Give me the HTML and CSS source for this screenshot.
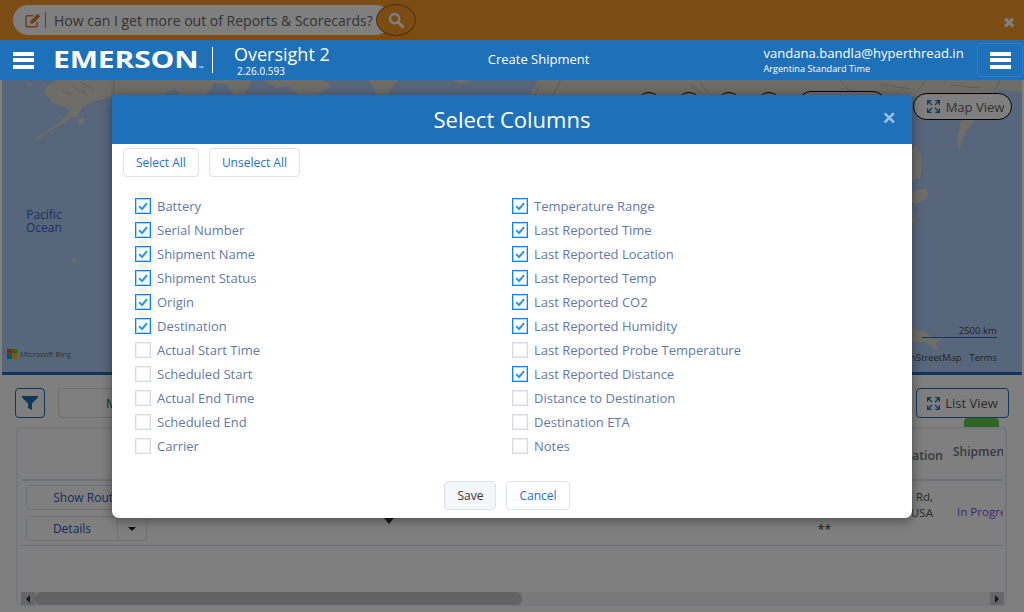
FILE: index.html
```html
<!DOCTYPE html>
<html lang="en">
<head>
<meta charset="utf-8">
<title>Select Columns</title>
<link rel="stylesheet" href="styles.css">
</head>
<body>
<svg class="defs" width="0" height="0" aria-hidden="true">
  <symbol id="tick" viewBox="0 0 16 16"><path d="M3.6 8.2 6.9 11.6 12.6 4.6" fill="none" stroke="currentColor" stroke-width="2.2"/></symbol>
  <symbol id="expand" viewBox="0 0 14 14"><path d="M.7 5V.7H5M.7.7 5.4 5.4M9 .7h4.3V5M13.3.7 8.6 5.4M.7 9v4.3H5M.7 13.3 5.4 8.6M9 13.3h4.3V9M13.3 13.3 8.6 8.6" fill="none" stroke="currentColor" stroke-width="1.4"/></symbol>
</svg>
<div class="promo">
  <div class="ask">
    <svg class="edit" viewBox="0 0 18 16"><path d="M13 9v4a1.6 1.6 0 0 1-1.6 1.6H2.6A1.6 1.6 0 0 1 1 13V4.6A1.6 1.6 0 0 1 2.6 3h6.2" fill="none" stroke="currentColor" stroke-width="1.6"/><path d="M6 8.2 13.4.8l2.8 2.8L8.8 11l-3.3.5z" fill="currentColor"/></svg>
    <span class="ask-sep"></span>
    <span class="ask-text">How can I get more out of Reports &amp; Scorecards?</span>
  </div>
  <div class="ask-go">
    <svg viewBox="0 0 16 16" width="16" height="16"><circle cx="6.6" cy="6.6" r="4.6" fill="none" stroke="currentColor" stroke-width="2.4"/><path d="M10 10l4.6 4.6" stroke="currentColor" stroke-width="3" stroke-linecap="round"/></svg>
  </div>
  <span class="promo-close">✖</span>
</div>
<header class="topbar">
  <div class="burger"><i></i><i></i><i></i></div>
  <div class="logo">EMERSON<small>™</small></div>
  <div class="brand">
    <div class="brand-name">Oversight 2</div>
    <div class="brand-ver">2.26.0.593</div>
  </div>
  <div class="nav-title">Create Shipment</div>
  <div class="user">
    <div class="user-mail">vandana.bandla@hyperthread.in</div>
    <div class="user-tz">Argentina Standard Time</div>
  </div>
  <div class="menu-btn"><div class="burger"><i></i><i></i><i></i></div></div>
</header>
<section class="map">
  <svg class="map-art" viewBox="0 0 1022 292" preserveAspectRatio="none">
    <g class="land">
      <path d="M55 0H110V17L93 21 80 28 76 36 70 38 58 45 45 53 34 61 36 57 48 49 60 40 68 31 62 27 50 22 42 12 45 6z"/>
      <path d="M76 40l5-3 2 4-5 4z"/>
      <path d="M24 1l7 5-5-1z"/>
      <path d="M110 0H250L243 15H232L225 4 213 3 204 15H180L172 8 162 15H110z"/>
      <path d="M262 0H322L330 6 316 15H298L286 6 274 8z"/>
      <path d="M368 0H396L386 15H376z"/>
      <path d="M452 0H468L460 4z"/>
      <path d="M528 15 538 0H1022V12L1000 10 980 16H528z"/>
      <path d="M977 28 974 42 965 52 959 70 957 62 960 44 966 32z"/>
      <path d="M916 64 922 80 920 98 912 100 912 70z"/>
      <path d="M912 112 926 108 928 118 916 124 912 122z"/>
      <path d="M912 128 915 140 912 146z"/>
      <path d="M912 248 925 252 932 258 945 256 936 263 938 272 925 262 912 262z"/>
      <path d="M71 178l3 2-1 3-3-2z"/>
    </g>
    <g class="coast">
      <path d="M112 0V15M70 6l14 8M80 3l12 6M60 10l8 4M540 4l-6 11M560 0l-8 15M690 5l10 8M700 2l6 10M840 0l10 12M880 4l30 5M950 5l30 3M925 0l-8 12M1000 0l-5 10"/>
    </g>
  </svg>
  <div class="map-tools">
    <i class="dot"></i><i class="dot"></i><i class="dot"></i><i class="dot"></i><i class="pill"></i>
  </div>
  <button class="map-view"><svg class="ico"><use href="#expand"/></svg>Map View</button>
  <div class="ocean"><div>Pacific</div><div>Ocean</div></div>
  <div class="bing">
    <svg viewBox="0 0 10 10" width="10" height="10"><path fill="#f25022" d="M0 0h4.8v4.8H0z"/><path fill="#7fba00" d="M5.2 0H10v4.8H5.2z"/><path fill="#00a4ef" d="M0 5.2h4.8V10H0z"/><path fill="#ffb900" d="M5.2 5.2H10V10H5.2z"/></svg>
    <span>Microsoft Bing</span>
  </div>
  <div class="scale">2500 km</div>
  <div class="attrib"><span>OpenStreetMap</span><span>Terms</span></div>
</section>
<section class="toolbar">
  <button class="btn-blue filter"><svg viewBox="0 0 16 16" width="16" height="16"><path d="M0 1h16v1.4L10 8.6V15L6 13V8.6L0 2.4z" fill="currentColor"/></svg></button>
  <button class="btn-map">Map</button>
  <button class="btn-blue list"><svg class="ico"><use href="#expand"/></svg>List View</button>
  <span class="green-tab"></span>
</section>
<section class="card">
  <div class="grid head">
    <div></div><div></div>
    <div class="h-loc">Last Reported Location</div>
    <div class="h-status">Shipment Status</div>
  </div>
  <div class="grid row">
    <div class="actions">
      <button class="act">Show Route</button>
      <div class="split"><button class="act">Details</button><span class="caret"><i></i></span></div>
    </div>
    <div class="marker-cell"><i class="marker"></i></div>
    <div class="loc"><div>n Rd,</div><div>USA</div><div class="stars">**</div></div>
    <div class="status">In Progress</div>
  </div>
  <div class="scroll">
    <span class="arrow"><i class="tri-l"></i></span>
    <span class="thumb"></span>
    <span class="arrow"><i class="tri-r"></i></span>
  </div>
</section>
<div class="overlay"></div>
<div class="modal">
  <div class="modal-head"><h2>Select Columns</h2><span class="modal-x">✕</span></div>
  <div class="bulk"><button class="ghost">Select All</button><button class="ghost">Unselect All</button></div>
  <div class="cols">
    <label class="opt"><span class="box on"><svg><use href="#tick"/></svg></span>Battery</label>
    <label class="opt"><span class="box on"><svg><use href="#tick"/></svg></span>Temperature Range</label>
    <label class="opt"><span class="box on"><svg><use href="#tick"/></svg></span>Serial Number</label>
    <label class="opt"><span class="box on"><svg><use href="#tick"/></svg></span>Last Reported Time</label>
    <label class="opt"><span class="box on"><svg><use href="#tick"/></svg></span>Shipment Name</label>
    <label class="opt"><span class="box on"><svg><use href="#tick"/></svg></span>Last Reported Location</label>
    <label class="opt"><span class="box on"><svg><use href="#tick"/></svg></span>Shipment Status</label>
    <label class="opt"><span class="box on"><svg><use href="#tick"/></svg></span>Last Reported Temp</label>
    <label class="opt"><span class="box on"><svg><use href="#tick"/></svg></span>Origin</label>
    <label class="opt"><span class="box on"><svg><use href="#tick"/></svg></span>Last Reported CO2</label>
    <label class="opt"><span class="box on"><svg><use href="#tick"/></svg></span>Destination</label>
    <label class="opt"><span class="box on"><svg><use href="#tick"/></svg></span>Last Reported Humidity</label>
    <label class="opt"><span class="box"></span>Actual Start Time</label>
    <label class="opt"><span class="box"></span>Last Reported Probe Temperature</label>
    <label class="opt"><span class="box"></span>Scheduled Start</label>
    <label class="opt"><span class="box on"><svg><use href="#tick"/></svg></span>Last Reported Distance</label>
    <label class="opt"><span class="box"></span>Actual End Time</label>
    <label class="opt"><span class="box"></span>Distance to Destination</label>
    <label class="opt"><span class="box"></span>Scheduled End</label>
    <label class="opt"><span class="box"></span>Destination ETA</label>
    <label class="opt"><span class="box"></span>Carrier</label>
    <label class="opt"><span class="box"></span>Notes</label>
  </div>
  <div class="modal-foot"><button class="ghost save">Save</button><button class="ghost">Cancel</button></div>
</div>
</body>
</html>
```
FILE: styles.css
```css
* { box-sizing: border-box; }
html, body { margin: 0; height: 612px; overflow: hidden; }
body { position: relative; background: #fff; font-family: "Open Sans", "Liberation Sans", sans-serif; color: #333; font-size: 13px; }
button { font-family: inherit; cursor: pointer; }
.defs { position: absolute; }

/* promo bar */
.promo { height: 40px; background: #f69828; display: flex; align-items: center; padding-left: 13px; }
.ask { width: 378px; height: 30px; background: #fff; border-radius: 15px; display: flex; align-items: center; padding-left: 12px; }
.edit { width: 17px; height: 15px; color: #d9792a; flex: none; }
.ask-sep { width: 1px; height: 16px; background: #d9792a; margin: 0 8px 0 3px; flex: none; }
.ask-text { font-size: 14px; color: #666; white-space: nowrap; }
.ask-go { width: 40px; height: 32px; margin-left: -15px; border: 1px solid #a0601c; border-radius: 50%; background: #f69828; color: #fff; display: flex; align-items: center; justify-content: center; position: relative; }
.promo-close { margin-left: auto; margin-right: 8px; margin-top: 5px; font-size: 15px; color: #fff; line-height: 1; }

/* header */
.topbar { height: 40px; background: #1e70b9; color: #fff; display: flex; align-items: center; position: relative; z-index: 2; padding: 0 1px 0 13px; }
.burger { width: 21px; display: flex; flex-direction: column; gap: 2.5px; flex: none; }
.burger i { display: block; height: 4px; background: #fff; }
.logo { width: 159px; flex: none; margin-left: 19px; font-weight: 700; font-size: 24px; line-height: 28px; height: 28px; margin-top: -2px; transform: scaleX(1.25); transform-origin: left center; white-space: nowrap; letter-spacing: -.1px; }
.logo small { font-size: 5px; vertical-align: -2px; font-weight: 400; }
.brand { flex: none; border-left: 1px solid #fff; padding-left: 21px; height: 26px; }
.brand-name { font-size: 18px; line-height: 24px; margin-top: -5px; white-space: nowrap; }
.brand-ver { font-size: 10px; line-height: 11px; margin-left: 3px; }
.nav-title { flex: none; margin-left: 158px; margin-top: -3px; font-size: 13px; white-space: nowrap; }
.user { flex: none; margin-left: 174px; }
.user-mail { font-size: 13.1px; line-height: 17px; white-space: nowrap; }
.user-tz { font-size: 9.2px; line-height: 13px; white-space: nowrap; }
.menu-btn { width: 46px; height: 34px; margin-left: auto; border: 1px solid #2c82cf; border-radius: 4px; display: flex; align-items: center; justify-content: center; flex: none; }

/* map */
.map { height: 295px; margin: 0 2px; position: relative; border-bottom: 3px solid #1e70b9; background: #b0cdf8; overflow: hidden; }
.map-art { position: absolute; left: 0; top: 0; width: 100%; height: 100%; }
.land path { fill: #dcdad0; }
.coast path { fill: none; stroke: #bab8ae; stroke-width: 1; }
.map-tools { position: absolute; left: 635px; top: 12px; display: flex; align-items: flex-start; gap: 16px; }
.dot { width: 24px; height: 24px; border-radius: 50%; border: 1px solid #000; }
.pill { width: 88px; height: 27px; border-radius: 13px; border: 1px solid #000; margin-top: -1px; margin-left: 1px; }
.map-view { position: absolute; left: 911px; top: 13px; width: 99px; height: 27px; border: 1px solid #000; border-radius: 14px; background: #fff; color: #666; font-size: 13px; display: flex; align-items: center; justify-content: center; gap: 6px; padding: 0 0 0 6px; }
.ico { width: 13px; height: 13px; color: #1e70b9; flex: none; }
.ocean { position: absolute; left: 24px; top: 128px; color: #3a5cc0; font-size: 12px; line-height: 13px; text-align: center; }
.bing { position: absolute; left: 5px; top: 269px; display: flex; align-items: center; gap: 3px; font-size: 7.6px; color: #666; }
.scale { position: absolute; right: 25px; top: 245px; width: 75px; text-align: right; font-size: 9.6px; line-height: 12px; color: #444; border-bottom: 1px solid #1e70b9; }
.attrib { position: absolute; right: 25px; top: 272px; display: flex; gap: 8px; font-size: 9.4px; line-height: 12px; color: #444; white-space: nowrap; }

/* toolbar */
.toolbar { height: 52px; padding: 13px 15px 0; display: flex; align-items: flex-start; position: relative; }
.btn-blue { height: 30px; border: 1px solid #1e70b9; border-radius: 4px; background: #fff; display: flex; align-items: center; justify-content: center; color: #555; font-size: 13px; padding: 0; }
.filter { width: 30px; color: #1e70b9; }
.btn-map { width: 200px; height: 30px; margin-left: 13px; border: 1px solid #ddd; border-radius: 4px; background: #fff; color: #1e7a58; font-size: 13px; text-align: left; padding: 0 0 0 47px; }
.list { width: 93px; margin-left: auto; gap: 5px; }
.green-tab { position: absolute; left: 964px; top: 43px; width: 35px; height: 9px; background: #5fc84a; border-radius: 4px 4px 0 0; }

/* results card */
.card { height: 179px; margin: 0 16px; width: 991px; border: 2px solid #e8eef8; border-radius: 5px; padding: 0 3px; background: #fff; }
.grid { display: grid; grid-template-columns: 126px 578px 218px 60px; }
.head { height: 52px; border-bottom: 2px solid #dde3ec; align-items: center; }
.h-loc { text-align: right; font-weight: 600; font-size: 12.4px; color: #6b7484; white-space: nowrap; overflow: hidden; direction: rtl; padding-top: 2px; }
.h-status { font-weight: 600; font-size: 12px; color: #6b7484; white-space: nowrap; overflow: hidden; margin: -6px 0 0 10px; }
.row { height: 65px; border-bottom: 1px solid #dde3ec; padding-top: 4px; }
.actions { padding-left: 5px; display: flex; flex-direction: column; gap: 6px; }
.act { height: 25px; width: 121px; border: 1px solid #dfe3ea; border-radius: 4px; background: #fff; color: #2a5cb0; font-size: 12px; padding: 0; flex: none; }
.split { display: flex; width: 121px; height: 25px; border: 1px solid #dfe3ea; border-radius: 4px; flex: none; }
.split .act { border: 0; border-right: 1px solid #dfe3ea; border-radius: 0; width: 91px; height: 23px; }
.caret { flex: 1; display: flex; align-items: center; justify-content: center; }
.caret i { border: 4px solid transparent; border-top-color: #222; border-bottom: 0; }
.marker-cell { padding: 33px 0 0 237px; }
.marker { display: block; width: 0; border: 5px solid transparent; border-top: 6px solid #333; border-bottom: 0; }
.loc { text-align: right; padding-right: 10px; font-size: 11.6px; line-height: 15.5px; color: #555; padding-top: 4px; }
.stars { margin: 2px 102px 0 0; color: #333; font-size: 12px; }
.status { font-size: 11.6px; color: #7b52e0; white-space: nowrap; overflow: hidden; padding: 19px 0 0 14px; line-height: 16px; }
.scroll { margin-top: 46px; height: 13px; width: 983px; display: flex; background: #f0f0f0; border-radius: 3px; }
.arrow { width: 14px; background: #cdcdcd; display: flex; align-items: center; justify-content: center; flex: none; }
.tri-l { border: 4px solid transparent; border-right: 4px solid #333; border-left: 0; }
.tri-r { border: 4px solid transparent; border-left: 4px solid #333; border-right: 0; }
.thumb { width: 487px; background: #c4c4c4; border-radius: 6px; margin-right: auto; }

/* modal */
.overlay { position: absolute; inset: 0; background: rgba(0,0,0,.5); z-index: 1; }
.modal { position: absolute; left: 112px; top: 95px; width: 800px; height: 423px; background: #fff; border-radius: 0 0 7px 7px; z-index: 3; box-shadow: 0 2px 12px rgba(0,0,0,.45); }
.modal-head { height: 49px; background: #1e70b9; color: #fff; display: flex; align-items: center; justify-content: center; position: relative; }
.modal-head h2 { margin: 0; font-size: 22px; font-weight: 400; line-height: 49px; }
.modal-x { position: absolute; right: 16px; top: 13px; font-size: 17px; font-weight: 700; color: #9cc2e4; line-height: 20px; }
.bulk { padding: 4px 0 0 11px; display: flex; gap: 10px; height: 33px; }
.ghost { height: 29px; border: 1px solid #dce1ea; border-radius: 4px; background: #fff; color: #1e70d0; font-size: 12px; padding: 0 12px; }
.cols { margin-top: 17px; padding-left: 23px; display: grid; grid-template-columns: 377px 377px; grid-auto-rows: 24px; }
.opt { display: flex; align-items: center; gap: 6px; font-size: 13px; color: #5f7aa8; white-space: nowrap; }
.box { width: 16px; height: 16px; border: 1px solid #d5dae4; box-shadow: inset 0 0 0 1px #eef0f5; flex: none; display: block; }
.box svg { display: block; width: 14px; height: 14px; color: #1e90ee; }
.box.on { border-color: #0f80f0; box-shadow: inset 0 0 0 1px rgba(21,131,240,.35); }
.modal-foot { margin-top: 23px; padding-right: 10px; display: flex; justify-content: center; gap: 10px; }
.save { background: #f4f6fa; color: #333; }
```
